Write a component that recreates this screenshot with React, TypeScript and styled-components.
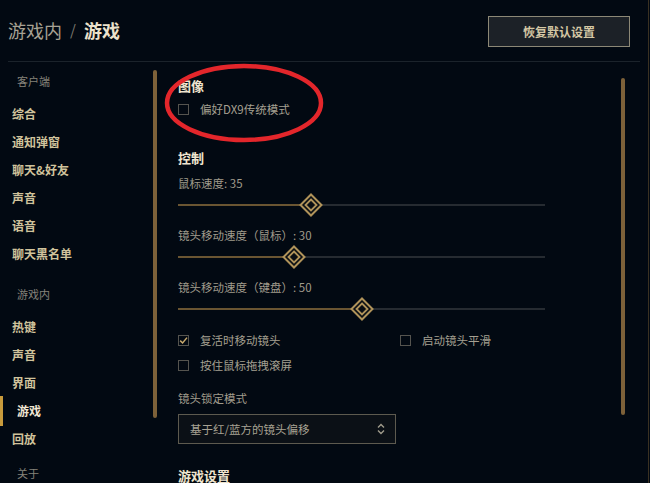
import { FC, ReactNode } from "react";
import styled, { createGlobalStyle } from "styled-components";

const GlobalStyle = createGlobalStyle`
  html, body {
    margin: 0;
    padding: 0;
    background: #020912;
  }
  body {
    font-family: "Noto Sans CJK SC", "Noto Sans", sans-serif;
  }
`;

interface NavEntry {
  label: string;
  active?: boolean;
}

const clientNav: NavEntry[] = [
  { label: "综合" },
  { label: "通知弹窗" },
  { label: "聊天&好友" },
  { label: "声音" },
  { label: "语音" },
  { label: "聊天黑名单" },
];

const gameNav: NavEntry[] = [
  { label: "热键" },
  { label: "声音" },
  { label: "界面" },
  { label: "游戏", active: true },
  { label: "回放" },
];

const Diamond: FC = () => (
  <svg width="24" height="24" viewBox="0 0 24 24">
    <polygon points="12,1.5 22.5,12 12,22.5 1.5,12" fill="#0a0e13" stroke="#b0935a" strokeWidth="2" />
    <polygon points="12,6.5 17.5,12 12,17.5 6.5,12" fill="#0a0e13" stroke="#b0935a" strokeWidth="1.8" />
  </svg>
);

const Slider: FC<{ value: number }> = ({ value }) => {
  const pos = `calc(14px + (100% - 28px) * ${value / 100})`;
  return (
    <SliderRoot>
      <Track />
      <Fill style={{ width: pos }} />
      <Thumb style={{ left: pos }}>
        <Diamond />
      </Thumb>
    </SliderRoot>
  );
};

const Checkbox: FC<{ checked?: boolean; children: ReactNode }> = ({ checked, children }) => (
  <CheckRow>
    <Box>
      {checked && (
        <svg width="9" height="9" viewBox="0 0 9 9">
          <path d="M1.2 4.6 L3.6 7 L8 1.6" fill="none" stroke="#c8aa6e" strokeWidth="1.5" />
        </svg>
      )}
    </Box>
    <CheckLabel>{children}</CheckLabel>
  </CheckRow>
);

const App: FC = () => {
  return (
    <Window>
      <GlobalStyle />
      <Header>
        <Title>
          <Crumb>游戏内</Crumb>
          <Slash>/</Slash>
          <CrumbCurrent>游戏</CrumbCurrent>
        </Title>
        <ResetButton>恢复默认设置</ResetButton>
      </Header>

      <Body>
        <Nav>
          <GroupLabel>客户端</GroupLabel>
          {clientNav.map((item) => (
            <NavItem key={item.label}>{item.label}</NavItem>
          ))}
          <GroupLabel $top={12}>游戏内</GroupLabel>
          {gameNav.map((item) => (
            <NavItem key={item.label} $active={item.active}>
              {item.label}
            </NavItem>
          ))}
          <GroupLabel $top={6}>关于</GroupLabel>
        </Nav>

        <ScrollThumb $top={8} $height={348} />

        <Content>
          <Heading>图像</Heading>
          <CheckGrid $top={3}>
            <Checkbox>偏好DX9传统模式</Checkbox>
          </CheckGrid>

          <Heading $top={29}>控制</Heading>
          <FieldLabel $top={6}>鼠标速度: 35</FieldLabel>
          <Slider value={35} />
          <FieldLabel $top={9}>镜头移动速度（鼠标）: 30</FieldLabel>
          <Slider value={30} />
          <FieldLabel $top={9}>镜头移动速度（键盘）: 50</FieldLabel>
          <Slider value={50} />

          <CheckGrid $top={9}>
            <Checkbox checked>复活时移动镜头</Checkbox>
            <Checkbox>启动镜头平滑</Checkbox>
            <Checkbox>按住鼠标拖拽滚屏</Checkbox>
          </CheckGrid>

          <FieldLabel $top={14}>镜头锁定模式</FieldLabel>
          <Select>
            <span>基于红/蓝方的镜头偏移</span>
            <svg width="8" height="12" viewBox="0 0 8 12">
              <path d="M1 4.5 L4 1.5 L7 4.5 M1 7.5 L4 10.5 L7 7.5" fill="none" stroke="#a09b8c" strokeWidth="1.4" />
            </svg>
          </Select>

          <Heading $top={22}>游戏设置</Heading>
        </Content>

        <ScrollThumb $top={16} $height={337} />
      </Body>

      <Annotation width="162" height="82" viewBox="0 0 162 82">
        <ellipse cx="81" cy="41" rx="77" ry="37" fill="none" stroke="#e3262b" strokeWidth="4.5" />
      </Annotation>
    </Window>
  );
};

const Window = styled.div`
  position: relative;
  width: 648px;
  height: 483px;
  overflow: hidden;
  background: #020912;
  border-right: 1px solid #3a3122;
  display: flex;
  flex-direction: column;
`;

const Header = styled.header`
  height: 61px;
  margin: 0 8px;
  padding-right: 10px;
  border-bottom: 1px solid #1b232b;
  display: flex;
  align-items: center;
  justify-content: space-between;
  flex-shrink: 0;
`;

const Title = styled.div`
  display: flex;
  align-items: center;
  gap: 8px;
  font-size: 18px;
  line-height: 24px;
  margin-top: -2px;
`;

const Crumb = styled.span`
  color: #a7a294;
`;

const Slash = styled.span`
  color: #7b786f;
  font-size: 15px;
`;

const CrumbCurrent = styled.span`
  color: #ece2cc;
  font-weight: 700;
`;

const ResetButton = styled.button`
  width: 142px;
  height: 31px;
  margin-top: 1px;
  border: 1px solid #8c8876;
  background: #1c2127;
  color: #d4c7a4;
  font-family: inherit;
  font-size: 12px;
  font-weight: 700;
  padding: 0;
`;

const Body = styled.div`
  flex: 1;
  display: grid;
  grid-template-columns: 153px 4px 464px 4px 1fr;
  align-items: start;
  overflow: hidden;
`;

const Nav = styled.nav`
  display: flex;
  flex-direction: column;
  padding-top: 5px;
`;

const GroupLabel = styled.div<{ $top?: number }>`
  height: 28px;
  line-height: 28px;
  padding-left: 17px;
  margin-top: ${(p) => p.$top ?? 0}px;
  margin-bottom: 5px;
  font-size: 11px;
  color: #85827a;
`;

const NavItem = styled.div<{ $active?: boolean }>`
  position: relative;
  height: 28px;
  line-height: 28px;
  padding-left: ${(p) => (p.$active ? "17px" : "12px")};
  font-size: 12px;
  font-weight: 700;
  color: ${(p) => (p.$active ? "#f0e6d2" : "#d0c39c")};

  &::before {
    content: "";
    display: ${(p) => (p.$active ? "block" : "none")};
    position: absolute;
    left: 0;
    top: -1px;
    width: 3px;
    height: 30px;
    background: #c89b3c;
  }
`;

const ScrollThumb = styled.div<{ $top: number; $height: number }>`
  margin-top: ${(p) => p.$top}px;
  height: ${(p) => p.$height}px;
  width: 4px;
  border-radius: 2px;
  background: #7d6139;
`;

const Content = styled.main`
  padding: 14px 0 0 21px;
  display: flex;
  flex-direction: column;
  align-items: flex-start;
`;

const Heading = styled.h3<{ $top?: number }>`
  margin: ${(p) => p.$top ?? 0}px 0 0;
  height: 20px;
  line-height: 20px;
  font-size: 13px;
  font-weight: 700;
  color: #efe5cf;
`;

const FieldLabel = styled.div<{ $top?: number }>`
  margin-top: ${(p) => p.$top ?? 0}px;
  margin-bottom: 1px;
  height: 18px;
  line-height: 18px;
  font-size: 11.5px;
  color: #a09b8c;
`;

const SliderRoot = styled.div`
  position: relative;
  width: 367px;
  height: 24px;
`;

const Track = styled.div`
  position: absolute;
  left: 0;
  right: 0;
  top: 11px;
  height: 2px;
  background: #262b31;
`;

const Fill = styled.div`
  position: absolute;
  left: 0;
  top: 11px;
  height: 2px;
  background: #6a5532;
`;

const Thumb = styled.div`
  position: absolute;
  top: 0;
  width: 24px;
  height: 24px;
  transform: translateX(-50%);
`;

const CheckGrid = styled.div<{ $top?: number }>`
  margin-top: ${(p) => p.$top ?? 0}px;
  display: grid;
  grid-template-columns: 222px auto;
  row-gap: 5px;
`;

const CheckRow = styled.label`
  display: flex;
  align-items: center;
  gap: 11px;
  height: 20px;
`;

const Box = styled.span`
  box-sizing: border-box;
  width: 11px;
  height: 11px;
  border: 1px solid #55544f;
  display: inline-flex;
  align-items: center;
  justify-content: center;
`;

const CheckLabel = styled.span`
  font-size: 11.5px;
  color: #a5a091;
`;

const Select = styled.div`
  box-sizing: border-box;
  margin-top: 6px;
  width: 218px;
  height: 30px;
  padding: 0 10px 0 11px;
  border: 1px solid #5d5a4f;
  background: #0b1016;
  display: flex;
  align-items: center;
  justify-content: space-between;
  font-size: 11.5px;
  color: #a7a293;
`;

const Annotation = styled.svg`
  position: absolute;
  left: 163px;
  top: 62px;
  pointer-events: none;
`;

export default App;
